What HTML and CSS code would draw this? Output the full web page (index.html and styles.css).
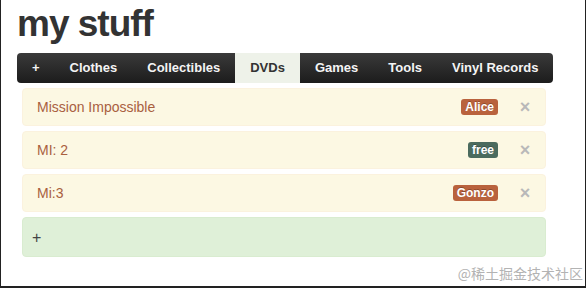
FILE: index.html
```html
<!DOCTYPE html>
<html lang="en">
  <head>
    <meta charset="UTF-8" />
    <title>my stuff</title>
    <link rel="stylesheet" href="styles.css">
  </head>
  <body>
    <div class="page">
      <h1>my stuff</h1>

      <ul class="nav">
        <li>+</li>
        <li>Clothes</li>
        <li>Collectibles</li>
        <li class="active">DVDs</li>
        <li>Games</li>
        <li>Tools</li>
        <li>Vinyl Records</li>
      </ul>

      <div class="items">
        <div class="item">
          <span class="name">Mission Impossible</span>
          <span class="tag lent">Alice</span>
          <span class="close">&times;</span>
        </div>
        <div class="item">
          <span class="name">MI: 2</span>
          <span class="tag free">free</span>
          <span class="close">&times;</span>
        </div>
        <div class="item">
          <span class="name">Mi:3</span>
          <span class="tag lent">Gonzo</span>
          <span class="close">&times;</span>
        </div>
        <div class="add">+</div>
      </div>

      <div class="watermark">@稀土掘金技术社区</div>
    </div>
  </body>
</html>
```

FILE: styles.css
```css
* {
  margin: 0;
  padding: 0;
  box-sizing: border-box;
}

html,
body {
  height: 100%;
  background: white;
  font-family: "Liberation Sans", Arial, sans-serif;
}

.page {
  position: relative;
  width: 586px;
  height: 288px;
  padding: 4px 0 0 16px;
  border-left: 1px solid #222;
  border-right: 1px solid #222;
  border-bottom: 2px solid #222;
}

h1 {
  font-size: 37px;
  line-height: 40px;
  font-weight: bold;
  letter-spacing: -1px;
  color: #333;
  margin-bottom: 9px;
}

.nav {
  list-style: none;
  display: inline-flex;
  height: 30px;
  background: linear-gradient(#3a3a3a, #1c1c1c);
  border-radius: 4px;
  overflow: hidden;
}

.nav li {
  padding: 0 15px;
  line-height: 30px;
  font-size: 13px;
  font-weight: bold;
  color: #f4f4f4;
}

.nav li.active {
  background: #eef2e9;
  color: #333;
}

.items {
  width: 524px;
  margin: 5px 0 0 5px;
}

.item {
  display: flex;
  align-items: center;
  height: 38px;
  margin-bottom: 5px;
  padding: 0 12px 0 14px;
  background: #fcf8e3;
  border: 1px solid #fbf2de;
  border-radius: 4px;
  color: #a9603f;
  font-size: 14px;
}

.name {
  flex: 1;
}

.tag {
  height: 16px;
  line-height: 16px;
  padding: 0 4px;
  margin-right: 19px;
  border-radius: 3px;
  color: white;
  font-size: 12px;
  font-weight: bold;
  text-shadow: 0 -1px 0 rgba(0, 0, 0, 0.25);
}

.tag.lent {
  background: #b9623d;
}

.tag.free {
  background: #4b6b5e;
}

.close {
  width: 16px;
  text-align: center;
  color: #b9b9b9;
  font-size: 18px;
  font-weight: bold;
  line-height: 18px;
}

.add {
  height: 40px;
  line-height: 40px;
  padding-left: 9px;
  background: #dff0d8;
  border: 1px solid #d9ecd0;
  border-radius: 4px;
  color: #444;
  font-size: 16px;
}

.watermark {
  position: absolute;
  right: 2px;
  bottom: 3px;
  font-family: "Noto Sans CJK SC", sans-serif;
  font-size: 14px;
  color: #b3b3b3;
}
```
